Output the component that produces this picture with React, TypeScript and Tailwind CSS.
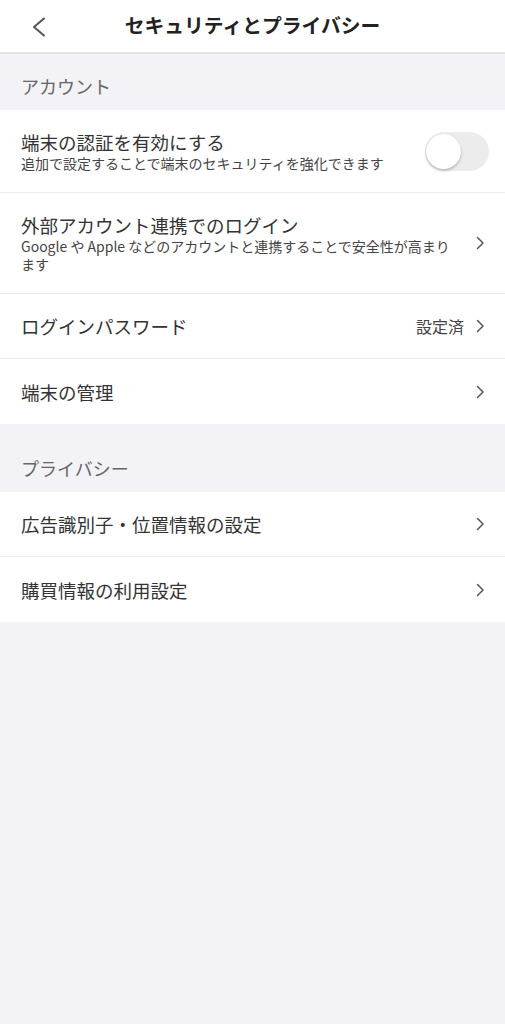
import React from "react"

const font = { fontFamily: '"Noto Sans CJK JP", "Noto Sans", sans-serif' }

function Chevron() {
  return (
    <svg width="9" height="14" viewBox="0 0 9 14" className="shrink-0">
      <path d="M1.5 1.5 L7 7 L1.5 12.5" fill="none" stroke="#555" strokeWidth="1.5" strokeLinecap="round" strokeLinejoin="round" />
    </svg>
  )
}

function SectionHeader({ title, className }: { title: string; className: string }) {
  return (
    <div className={`px-[21px] pb-3 text-[18px] leading-6 text-[#666] ${className}`}>{title}</div>
  )
}

function Row({ title, sub, right, last, pr = "pr-[20px]" }: { title: string; sub?: string; right?: React.ReactNode; last?: boolean; pr?: string }) {
  return (
    <div className={`flex items-center bg-white pl-[21px] ${pr} ${sub ? "py-[20px]" : "h-[65px]"} ${last ? "" : "border-b border-[#ebebeb]"}`}>
      <div className="flex-1 min-w-0">
        <div className="text-[18.5px] leading-[24px] text-[#333]">{title}</div>
        {sub && <div className="text-[14px] leading-[18px] text-[#444] pr-[14px]">{sub}</div>}
      </div>
      {right}
    </div>
  )
}

function Toggle() {
  return (
    <div className="relative w-[64px] h-[39px] rounded-full bg-[#ececec] shrink-0">
      <div className="absolute left-[1px] top-[2px] w-[35px] h-[35px] rounded-full bg-white shadow-[0_2px_3px_rgba(0,0,0,0.2),0_0_1px_rgba(0,0,0,0.15)]" />
    </div>
  )
}

export default function App() {
  return (
    <div className="min-h-[1024px] bg-[#f2f2f7]" style={font}>
      <header className="relative h-[54px] bg-white border-b-2 border-[#e3e3e3] flex items-center justify-center">
        <svg width="14" height="20" viewBox="0 0 14 20" className="absolute left-[32px] top-[17px]">
          <path d="M12 1.5 L2 10 L12 18.5" fill="none" stroke="#555" strokeWidth="2" strokeLinecap="round" strokeLinejoin="round" />
        </svg>
        <h1 className="text-[19.8px] font-bold text-[#222] -mt-[3px]">セキュリティとプライバシー</h1>
      </header>

      <SectionHeader title="アカウント" className="pt-5" />
      <Row title="端末の認証を有効にする" sub="追加で設定することで端末のセキュリティを強化できます" right={<Toggle />} pr="pr-[16px]" />
      <Row
        title="外部アカウント連携でのログイン"
        sub="Google や Apple などのアカウントと連携することで安全性が高まります"
        right={<Chevron />}
      />
      <Row
        title="ログインパスワード"
        right={
          <div className="flex items-center gap-[12px]">
            <span className="text-[16px] text-[#444]">設定済</span>
            <Chevron />
          </div>
        }
      />
      <Row title="端末の管理" right={<Chevron />} last />

      <SectionHeader title="プライバシー" className="pt-[32px]" />
      <Row title="広告識別子・位置情報の設定" right={<Chevron />} />
      <Row title="購買情報の利用設定" right={<Chevron />} last />
    </div>
  )
}
